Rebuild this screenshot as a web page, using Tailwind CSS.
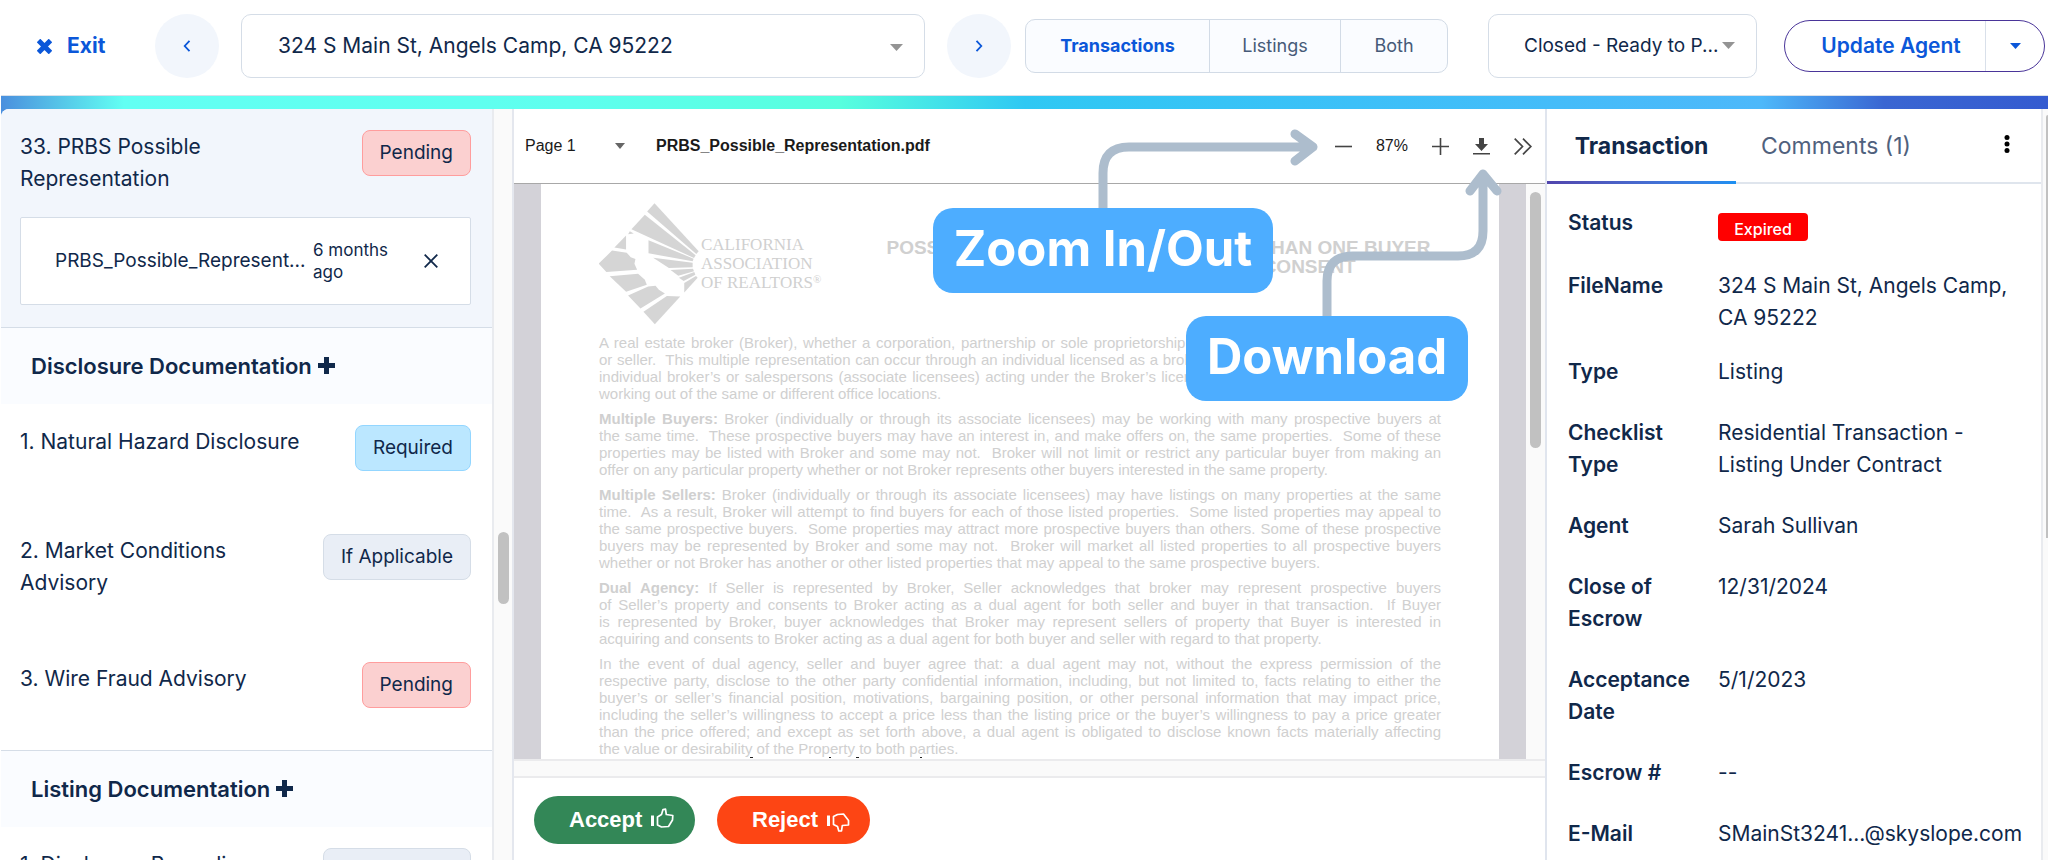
<!DOCTYPE html>
<html lang="en">
<head>
<meta charset="utf-8">
<title>Transaction Review</title>
<script src="https://cdn.jsdelivr.net/npm/@tailwindcss/browser@4"></script>
</head>
<body class="flex h-screen flex-col overflow-hidden bg-white pl-px font-['Inter',sans-serif] text-[21px] leading-8 text-[#10284a]">

<header class="flex shrink-0 items-center border-b border-[#d9e1ea] pt-[14px] pb-[17px] pl-9 pr-[3px]">
  <button class="flex w-[70px] shrink-0 items-center gap-[15px] font-bold text-[#0b57d9] whitespace-nowrap">
    <svg class="size-[15px] shrink-0" viewBox="0 0 15 15" stroke="currentColor" stroke-width="5"><path d="M1.500 1.500L13.500 13.500M13.500 1.500L1.500 13.500"/></svg>Exit
  </button>
  <button aria-label="Previous" class="ml-12 grid size-16 shrink-0 place-items-center rounded-full bg-[#f2f6fc] text-[#0b57d9]">
    <svg class="h-3 w-[8px]" viewBox="0 0 8 12" fill="none" stroke="currentColor" stroke-width="1.800"><path d="M6.500 .8L1.700 6l4.800 5.200"/></svg>
  </button>
  <div class="relative ml-[22px] min-w-0 flex-1">
    <select aria-label="Property" class="h-16 w-full appearance-none rounded-[10px] border border-[#d5dde7] bg-white pb-px pl-[36px] pr-12"><option>324 S Main St, Angels Camp, CA 95222</option></select>
    <svg class="pointer-events-none absolute right-[22px] top-[30px] h-[7px] w-[13px]" viewBox="0 0 13 7" fill="#949494"><path d="M0 0h13L6.500 7z"/></svg>
  </div>
  <button aria-label="Next" class="ml-[22px] grid size-16 shrink-0 place-items-center rounded-full bg-[#f2f6fc] text-[#0b57d9]">
    <svg class="h-3 w-[8px]" viewBox="0 0 8 12" fill="none" stroke="currentColor" stroke-width="1.800"><path d="M1.500 .8L6.300 6l-4.800 5.200"/></svg>
  </button>
  <div class="ml-[14px] flex h-[54px] w-[423px] shrink-0 rounded-[10px] border border-[#d2dbe6] bg-[#fafcff] text-[18px] text-[#465a78]">
    <button class="w-[183px] font-bold text-[#0b57d9]">Transactions</button>
    <button class="w-[132px] border-x border-[#d2dbe6]">Listings</button>
    <button class="flex-1">Both</button>
  </div>
  <div class="relative ml-10 w-[269px] shrink-0">
    <select aria-label="Status" class="h-16 w-full appearance-none rounded-[10px] border border-[#d5dde7] bg-white pb-px pl-[35px] text-[19px]"><option>Closed - Ready to P...</option></select>
    <svg class="pointer-events-none absolute right-[22px] top-7 h-[7px] w-[13px]" viewBox="0 0 13 7" fill="#949494"><path d="M0 0h13L6.500 7z"/></svg>
  </div>
  <div class="ml-[27px] flex h-[52px] w-[261px] shrink-0 rounded-full border border-[#4a3599] font-semibold text-[#0b57d9]">
    <button class="flex-1 pl-3">Update Agent</button>
    <button aria-label="More updates" class="grid w-[59px] place-items-center border-l border-[#d9e0ea]"><svg class="h-[6px] w-[11px]" viewBox="0 0 11 6" fill="currentColor"><path d="M0 0h11L5.500 6z"/></svg></button>
  </div>
</header>

<div class="h-[13px] shrink-0 bg-[linear-gradient(90deg,#4a8fde_0%,#62fff3_6%,#5effee_28%,#57ffde_41%,#2fc8f3_50%,#3cc0f8_66%,#4db8fa_86%,#3a66d2_92%,#345bd0_100%)]"></div>

<main class="flex min-h-0 flex-1 bg-[linear-gradient(#4a8fde,#4a8fde)] bg-[length:8px_8px] bg-no-repeat">

  <!-- Checklist -->
  <section class="flex w-[513px] shrink-0 border-r-2 border-[#e4e7ee]">
    <div class="min-w-0 flex-1 overflow-hidden rounded-tl-[8px] border-r-2 border-[#e9ebef] bg-white">
      <div class="border-b border-[#d5dde7] bg-[#f2f6fc] pl-[19px] pr-[21px] pt-[21px] pb-[22px]">
        <div class="flex items-start justify-between">
          <p class="w-[300px] pt-px">33. PRBS Possible<br>Representation</p>
          <button class="h-[46px] rounded-[8px] border border-[#ff9d9d] bg-[#fbd0d0] px-[17px] text-[19px]">Pending</button>
        </div>
        <div class="mt-[22px] flex h-[88px] items-center rounded-[2px] border border-[#d5dde7] bg-white pl-[34px]">
          <span class="w-[258px] whitespace-nowrap text-[19px]">PRBS_Possible_Represent...</span>
          <span class="w-[90px] text-[17px] leading-[22px]">6 months<br>ago</span>
          <button aria-label="Remove file" class="ml-[21px]"><svg class="size-[14px]" viewBox="0 0 14 14" stroke="currentColor" stroke-width="1.800"><path d="M.7 .7l12.600 12.600M13.300 .7L.7 13.300"/></svg></button>
        </div>
      </div>
      <h2 class="flex h-[76px] items-center gap-[6px] bg-[#fafcff] pb-px pl-[30px] text-[22px] font-semibold">Disclosure Documentation <svg class="size-[17px]" viewBox="0 0 17 17" fill="currentColor"><path d="M6 0h5v6h6v5h-6v6H6v-6H0V6h6z"/></svg></h2>
      <div class="flex items-start justify-between pl-[19px] pr-[21px] pt-[21px] pb-[42px]">
        <p class="pt-px">1. Natural Hazard Disclosure</p>
        <button class="h-[46px] rounded-[8px] border border-[#93d6ff] bg-[#bbe7ff] px-[17px] text-[19px]">Required</button>
      </div>
      <div class="flex items-start justify-between pl-[19px] pr-[21px] pt-[21px] pb-[42px]">
        <p class="pt-px">2. Market Conditions<br>Advisory</p>
        <button class="h-[46px] rounded-[8px] border border-[#d5dde7] bg-[#e9eef6] px-[17px] text-[19px]">If Applicable</button>
      </div>
      <div class="flex items-start justify-between pl-[19px] pr-[21px] pt-[21px] pb-[42px]">
        <p class="pt-px">3. Wire Fraud Advisory</p>
        <button class="h-[46px] rounded-[8px] border border-[#ff9d9d] bg-[#fbd0d0] px-[17px] text-[19px]">Pending</button>
      </div>
      <h2 class="flex h-[77px] items-center gap-[6px] border-t border-[#d5dde7] bg-[#fafcff] pb-px pl-[30px] text-[22px] font-semibold">Listing Documentation <svg class="size-[17px]" viewBox="0 0 17 17" fill="currentColor"><path d="M6 0h5v6h6v5h-6v6H6v-6H0V6h6z"/></svg></h2>
      <div class="flex items-start justify-between pl-[19px] pr-[21px] pt-[21px]">
        <p class="w-[250px] pt-px">1. Disclosure Regarding Real Estate Agency</p>
        <button class="h-[46px] rounded-[8px] border border-[#d5dde7] bg-[#e9eef6] px-[17px] text-[19px]">If Applicable</button>
      </div>
    </div>
    <div class="w-[18px] bg-[#fafafa] px-1 pt-[423px]"><div class="h-[72px] w-[11px] rounded-full bg-[#c1c1c1]"></div></div>
  </section>

  <!-- Document viewer -->
  <section class="relative flex min-w-0 flex-1 flex-col bg-white">
    <div class="flex h-[75px] shrink-0 items-center border-b border-[#a8a8a8] pl-[11px] pr-[13px] font-['Liberation_Sans',Arial,sans-serif] text-[16px] text-[#1a1a1a]">
      <div class="relative w-[131px] shrink-0">
        <select aria-label="Page" class="w-full appearance-none bg-transparent"><option>Page 1</option></select>
        <svg class="pointer-events-none absolute right-[31px] top-[13px] h-[6px] w-[10px]" viewBox="0 0 10 6" fill="#666"><path d="M0 0h10L5 6z"/></svg>
      </div>
      <span class="font-bold">PRBS_Possible_Representation.pdf</span>
      <div class="ml-auto flex items-center gap-[24px] text-[#444]">
        <button aria-label="Zoom out"><svg class="size-[17px]" viewBox="0 0 17 17" stroke="currentColor" stroke-width="1.600"><path d="M0 8.500h17"/></svg></button>
        <span class="text-[#1a1a1a]">87%</span>
        <button aria-label="Zoom in"><svg class="size-[17px]" viewBox="0 0 17 17" stroke="currentColor" stroke-width="1.600"><path d="M0 8.500h17M8.500 0v17"/></svg></button>
        <button aria-label="Download"><svg class="size-[17px]" viewBox="0 0 17 17" fill="currentColor"><path d="M6 0h5v6h4l-6.500 7L2 6h4zM0 15h17v1.600H0z"/></svg></button>
        <button aria-label="More tools"><svg class="h-[17px] w-[18px]" viewBox="0 0 18 17" fill="none" stroke="currentColor" stroke-width="1.700"><path d="M.7 .7l7.800 7.800-7.800 7.800M9 .7l7.800 7.800L9 16.300"/></svg></button>
      </div>
    </div>

    <div class="flex min-h-0 flex-1">
      <div class="relative min-w-0 flex-1 overflow-hidden bg-[#d3d2d8] px-[27px]">
        <article class="h-full bg-white pl-[58px] pr-[58px] pt-[18px] font-['Liberation_Sans',Arial,sans-serif] text-[15px] leading-[17px] text-[#d0d0d0]">
          <div class="flex h-[132px]">
            <svg class="h-[124px] w-[102px] shrink-0" viewBox="53 38 305 370" fill="#d5d5d5">
              <path d="M219 41L351 185L344 193L197 66z"/>
              <path d="M190 76L342 197L337 205L150 119z"/>
              <path d="M201 152L336 207L333 215L201 191z"/>
              <path d="M145 125l12 7-17 2z"/>
              <path d="M134 138L99 174L134 180z"/>
              <path d="M215 204L333 219L333 233L262 235z"/>
              <path d="M267 241L334 237L337 245L290 258z"/>
              <path d="M292 264L338 247L341 255L306 274z"/>
              <path d="M308 280L343 259L348 264L308 308z"/>
              <path d="M92 183L136 189L148 203L162 208L159 222L167 240L75 247L52 222z"/>
              <path d="M85 260L170 252L190 270L196 285L134 306z"/>
              <path d="M140 317L200 290L222 288L232 300L250 311L177 356z"/>
              <path d="M186 366L256 319L296 320L220 403z"/>
            </svg>
            <div class="pt-[33px] font-['Liberation_Serif',serif] text-[17px] leading-[19px] whitespace-nowrap">CALIFORNIA<br>ASSOCIATION<br>OF REALTORS<span class="align-top text-[11px] leading-3">®</span></div>
            <h1 class="ml-auto w-[565px] shrink-0 pt-[36px] text-center text-[19px] font-bold leading-[19px] whitespace-nowrap">POSSIBLE REPRESENTATION OF MORE THAN ONE BUYER<br>OR SELLER - DISCLOSURE AND CONSENT</h1>
          </div>
          <div class="flex flex-col gap-2 whitespace-nowrap">
            <div>
              <p class="[text-align-last:justify]">A real estate broker (Broker), whether a corporation, partnership or sole proprietorship, may represent more than one buyer</p>
              <p class="[text-align-last:justify]">or seller.&nbsp; This multiple representation can occur through an individual licensed as a broker or salesperson or through different</p>
              <p class="[text-align-last:justify]">individual broker’s or salespersons (associate licensees) acting under the Broker’s license.&nbsp; The associate licensees may be</p>
              <p>working out of the same or different office locations.</p>
            </div>
            <div>
              <p class="[text-align-last:justify]"><b>Multiple Buyers:</b> Broker (individually or through its associate licensees) may be working with many prospective buyers at</p>
              <p class="[text-align-last:justify]">the same time.&nbsp; These prospective buyers may have an interest in, and make offers on, the same properties.&nbsp; Some of these</p>
              <p class="[text-align-last:justify]">properties may be listed with Broker and some may not.&nbsp; Broker will not limit or restrict any particular buyer from making an</p>
              <p>offer on any particular property whether or not Broker represents other buyers interested in the same property.</p>
            </div>
            <div>
              <p class="[text-align-last:justify]"><b>Multiple Sellers:</b> Broker (individually or through its associate licensees) may have listings on many properties at the same</p>
              <p class="[text-align-last:justify]">time.&nbsp; As a result, Broker will attempt to find buyers for each of those listed properties.&nbsp; Some listed properties may appeal to</p>
              <p class="[text-align-last:justify]">the same prospective buyers.&nbsp; Some properties may attract more prospective buyers than others. Some of these prospective</p>
              <p class="[text-align-last:justify]">buyers may be represented by Broker and some may not.&nbsp; Broker will market all listed properties to all prospective buyers</p>
              <p>whether or not Broker has another or other listed properties that may appeal to the same prospective buyers.</p>
            </div>
            <div>
              <p class="[text-align-last:justify]"><b>Dual Agency:</b> If Seller is represented by Broker, Seller acknowledges that broker may represent prospective buyers</p>
              <p class="[text-align-last:justify]">of Seller’s property and consents to Broker acting as a dual agent for both seller and buyer in that transaction.&nbsp; If Buyer</p>
              <p class="[text-align-last:justify]">is represented by Broker, buyer acknowledges that Broker may represent sellers of property that Buyer is interested in</p>
              <p>acquiring and consents to Broker acting as a dual agent for both buyer and seller with regard to that property.</p>
            </div>
            <div>
              <p class="[text-align-last:justify]">In the event of dual agency, seller and buyer agree that: a dual agent may not, without the express permission of the</p>
              <p class="[text-align-last:justify]">respective party, disclose to the other party confidential information, including, but not limited to, facts relating to either the</p>
              <p class="[text-align-last:justify]">buyer’s or seller’s financial position, motivations, bargaining position, or other personal information that may impact price,</p>
              <p class="[text-align-last:justify]">including the seller’s willingness to accept a price less than the listing price or the buyer’s willingness to pay a price greater</p>
              <p class="[text-align-last:justify]">than the price offered; and except as set forth above, a dual agent is obligated to disclose known facts materially affecting</p>
              <p>the value or desirability of the Property to both parties.</p>
            </div>
          </div>
        </article>
        <svg class="absolute bottom-0 left-[236px] h-[3px] w-[180px]" viewBox="0 0 180 3" fill="#222"><path d="M0 1h3v1H0zM79 1h2v1h-2zM106 1h3v1h-3zM170 1h2v1h-2z"/></svg>
      </div>
      <div class="w-[19px] shrink-0 bg-[#fafafa] px-1 pt-[8px]"><div class="h-[256px] w-[11px] rounded-full bg-[#c1c1c1]"></div></div>
    </div>

    <div class="h-[19px] shrink-0 border-y-2 border-[#ebebed] bg-[#fafafa]"></div>
    <div class="flex h-[82px] shrink-0 gap-[22px] pl-[20px] pt-[18px] font-['Liberation_Sans',Arial,sans-serif] text-[22px] font-bold text-white">
      <button class="flex h-12 w-[161px] items-center gap-[9px] rounded-full bg-[#338757] pl-[35px]">Accept
        <svg class="size-6" viewBox="0 0 24 24" fill="none" stroke="#fff" stroke-width="1.700" stroke-linejoin="round"><path d="M1.500 7.500v10.500" stroke-width="3"/><path d="M6.500 9L10.500 6.500L12 1.500L14.500 1.200L15.300 6.500L21.800 7.500L21.500 12L17.500 18.500L10.500 19L6.500 17z"/></svg>
      </button>
      <button class="flex h-12 w-[153px] items-center gap-[9px] rounded-full bg-[#fd4514] pl-[35px]">Reject
        <svg class="size-6" viewBox="0 0 24 24" fill="none" stroke="#fff" stroke-width="1.700" stroke-linejoin="round"><path d="M1.500 7.500v10.500" stroke-width="3"/><path d="M6.500 8.500L10.500 6.500L16.500 6L21.500 12.500L21.500 17L15.300 17.500L14.500 23L11.800 23L10.500 18.500L6.500 16.500z"/></svg>
      </button>
    </div>

    <!-- Callouts -->
    <svg class="pointer-events-none absolute left-[580px] top-[14px] h-[200px] w-[420px]" viewBox="0 0 420 200" fill="none" stroke="#adbdcd" stroke-width="9" stroke-linecap="round" stroke-linejoin="round">
      <path d="M9 90V50Q9 24 35 24H218M201 11L219 24L201 38"/>
      <path d="M233 194V158Q233 133 259 133H364Q389 133 389 108V52M376 68L389 51L403 68"/>
    </svg>
    <div class="absolute left-[419px] top-[99px] flex h-[85px] w-[340px] items-center justify-center rounded-[20px] bg-[#4dadff] pb-1 text-[49px] font-bold text-white">Zoom In/Out</div>
    <div class="absolute left-[672px] top-[207px] flex h-[85px] w-[282px] items-center justify-center rounded-[20px] bg-[#4dadff] pb-1 text-[49px] font-bold text-white">Download</div>
  </section>

  <!-- Transaction details -->
  <aside class="flex w-[503px] shrink-0 border-l-2 border-[#e0e5ee] bg-white">
    <div class="min-w-0 flex-1 border-r-2 border-[#e9ebef]">
      <div class="relative flex h-[75px] items-center border-b-2 border-[#dfe5ed] text-[23px]">
        <button class="w-[189px] text-center font-bold">Transaction</button>
        <button class="ml-[25px] text-[#50617d]">Comments (1)</button>
        <button aria-label="Menu" class="ml-auto mr-[31px] pb-1"><svg class="h-[18px] w-[6px]" viewBox="0 0 6 18" fill="#000"><circle cx="3" cy="2.500" r="2.500"/><circle cx="3" cy="9" r="2.500"/><circle cx="3" cy="15.500" r="2.500"/></svg></button>
        <div class="absolute -bottom-[2px] left-0 h-[3px] w-[189px] bg-linear-to-r from-[#5145ad] to-[#1b90f2]"></div>
      </div>
      <dl class="grid grid-cols-[150px_1fr] pl-[21px] pt-[23px] whitespace-nowrap [&_dt]:font-semibold">
        <dt class="mb-[31px]">Status</dt><dd><span class="mt-[6px] grid h-7 w-[90px] place-items-center rounded-[4px] bg-[#f00] text-[16px] font-medium text-white">Expired</span></dd>
        <dt>FileName</dt><dd class="mb-[22px]">324 S Main St, Angels Camp,<br>CA 95222</dd>
        <dt class="mb-[29px]">Type</dt><dd>Listing</dd>
        <dt class="mb-[29px]">Checklist<br>Type</dt><dd>Residential Transaction -<br>Listing Under Contract</dd>
        <dt class="mb-[29px]">Agent</dt><dd>Sarah Sullivan</dd>
        <dt class="mb-[29px]">Close of<br>Escrow</dt><dd>12/31/2024</dd>
        <dt class="mb-[29px]">Acceptance<br>Date</dt><dd>5/1/2023</dd>
        <dt class="mb-[29px]">Escrow #</dt><dd>--</dd>
        <dt>E-Mail</dt><dd>SMainSt3241...@skyslope.com</dd>
      </dl>
    </div>
    <div class="w-[5px] bg-[#fafafa] pl-[3px] pt-[6px]"><div class="h-[423px] w-[2px] rounded-tl-full bg-[#c1c1c1]"></div></div>
  </aside>
</main>
</body>
</html>
